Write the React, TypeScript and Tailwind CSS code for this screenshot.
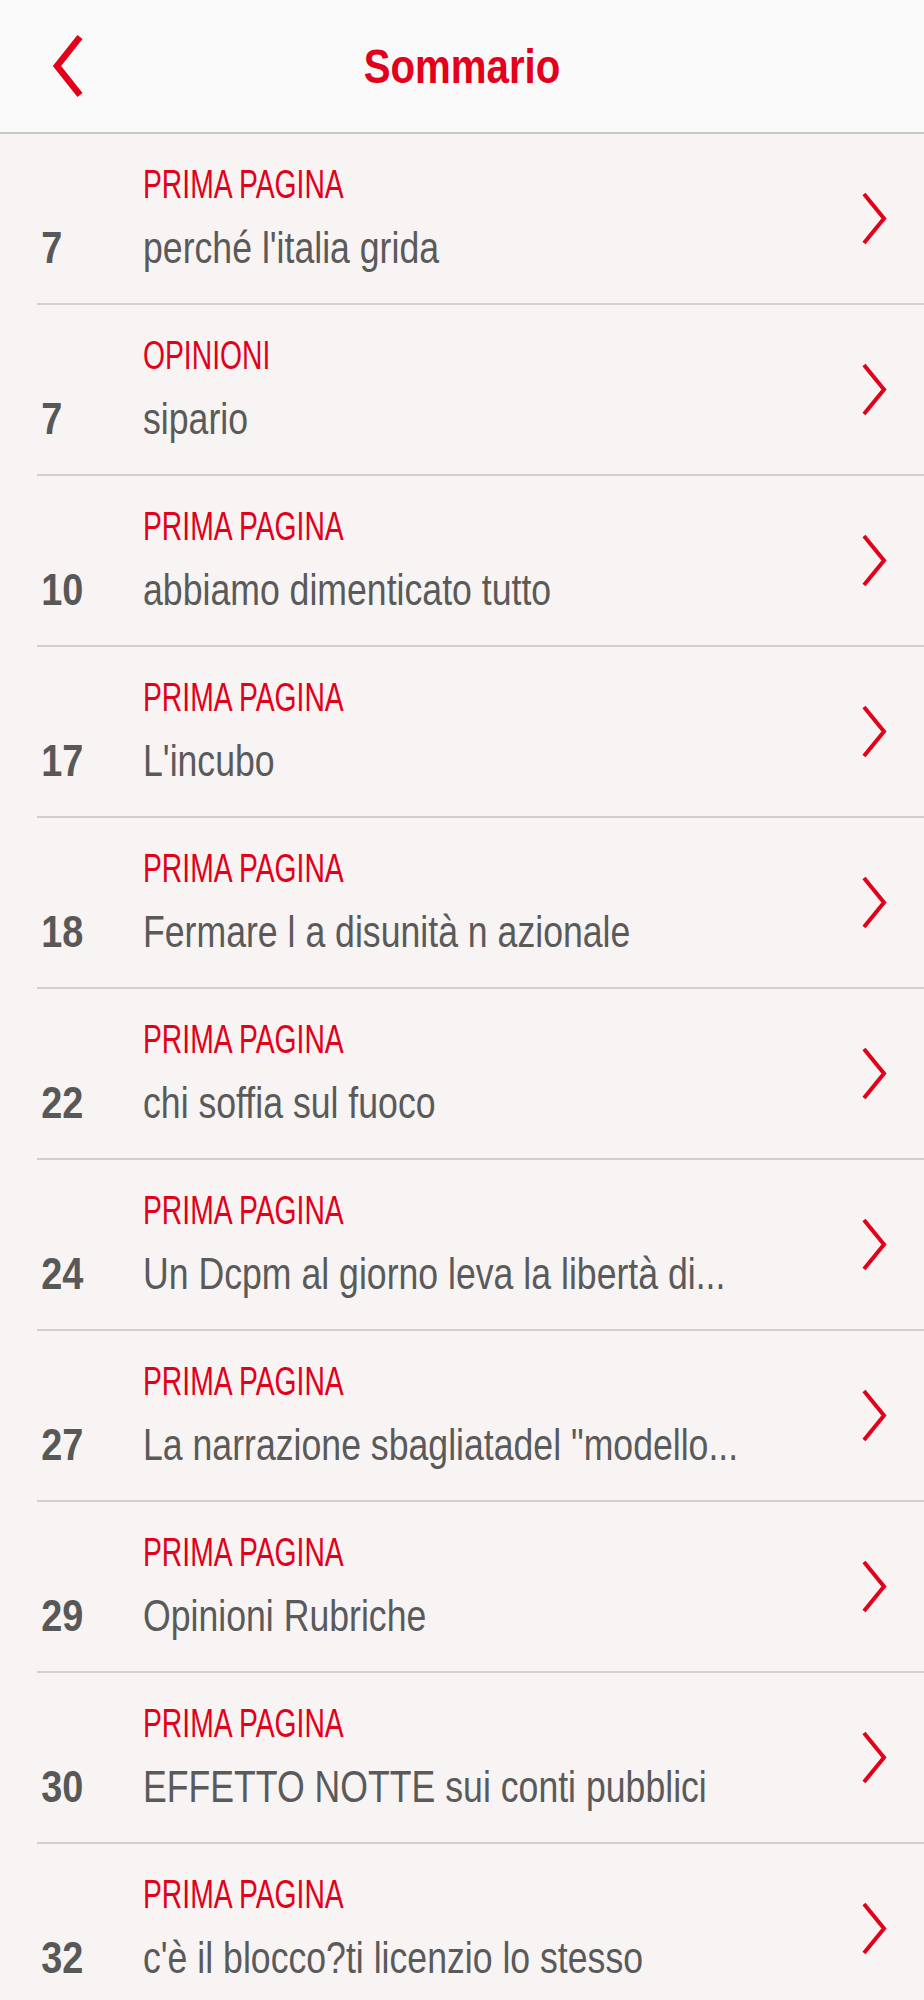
const items = [
  { page: '7', section: 'PRIMA PAGINA', title: "perché l'italia grida" },
  { page: '7', section: 'OPINIONI', title: 'sipario' },
  { page: '10', section: 'PRIMA PAGINA', title: 'abbiamo dimenticato tutto' },
  { page: '17', section: 'PRIMA PAGINA', title: "L'incubo" },
  { page: '18', section: 'PRIMA PAGINA', title: 'Fermare l a disunità n azionale' },
  { page: '22', section: 'PRIMA PAGINA', title: 'chi soffia sul fuoco' },
  { page: '24', section: 'PRIMA PAGINA', title: 'Un Dcpm al giorno leva la libertà di...' },
  { page: '27', section: 'PRIMA PAGINA', title: 'La narrazione sbagliatadel "modello...' },
  { page: '29', section: 'PRIMA PAGINA', title: 'Opinioni Rubriche' },
  { page: '30', section: 'PRIMA PAGINA', title: 'EFFETTO NOTTE sui conti pubblici' },
  { page: '32', section: 'PRIMA PAGINA', title: "c'è il blocco?ti licenzio lo stesso" },
]

// no narrow face installed, so the condensed look comes from scale-x
const Header = () => (
  <div className="h-[134px] bg-[#f9f9f9] border-b-2 border-[#c8c8c8] grid grid-cols-[200px_1fr_200px] items-center">
    <button className="pl-[51px] flex items-center">
      <svg width="34" height="66" viewBox="0 0 34 66" fill="none">
        <polyline points="29,4 6,33 29,62" stroke="#e2001a" strokeWidth="6.5" strokeLinejoin="miter" />
      </svg>
    </button>
    <h1 className="text-center text-[49px] leading-[52px] font-bold text-[#e2001a] scale-x-[0.82] whitespace-nowrap">
      Sommario
    </h1>
    <div />
  </div>
)

const Row = ({ page, section, title }: { page: string; section: string; title: string }) => (
  <div className="ml-[37px] h-[171px] border-b-2 border-[#d2cfce] flex items-stretch">
    <div className="w-[106px] pl-[5px] pt-[88px] text-[44px] leading-[52px] font-bold text-[#585858] origin-left scale-x-[0.86]">
      {page}
    </div>
    <div className="flex-1 min-w-0 pt-[26px]">
      <div className="text-[41px] leading-[48px] text-[#e2001a] origin-left scale-x-[0.69] whitespace-nowrap">{section}</div>
      <div className="mt-[14px] text-[44px] leading-[52px] text-[#5a5a5a] origin-left scale-x-[0.81] whitespace-nowrap">
        {title}
      </div>
    </div>
    <div className="flex items-center pr-[36px]">
      <svg width="28" height="55" viewBox="0 0 28 55" fill="none">
        <polyline points="4,3 24,27.5 4,52" stroke="#e2001a" strokeWidth="4" />
      </svg>
    </div>
  </div>
)

export default function App() {
  return (
    <div className="min-h-screen bg-[#f7f4f3] font-['Liberation_Sans',Arial,sans-serif]">
      <Header />
      <div>
        {items.map((it, i) => (
          <Row key={i} {...it} />
        ))}
      </div>
    </div>
  )
}
